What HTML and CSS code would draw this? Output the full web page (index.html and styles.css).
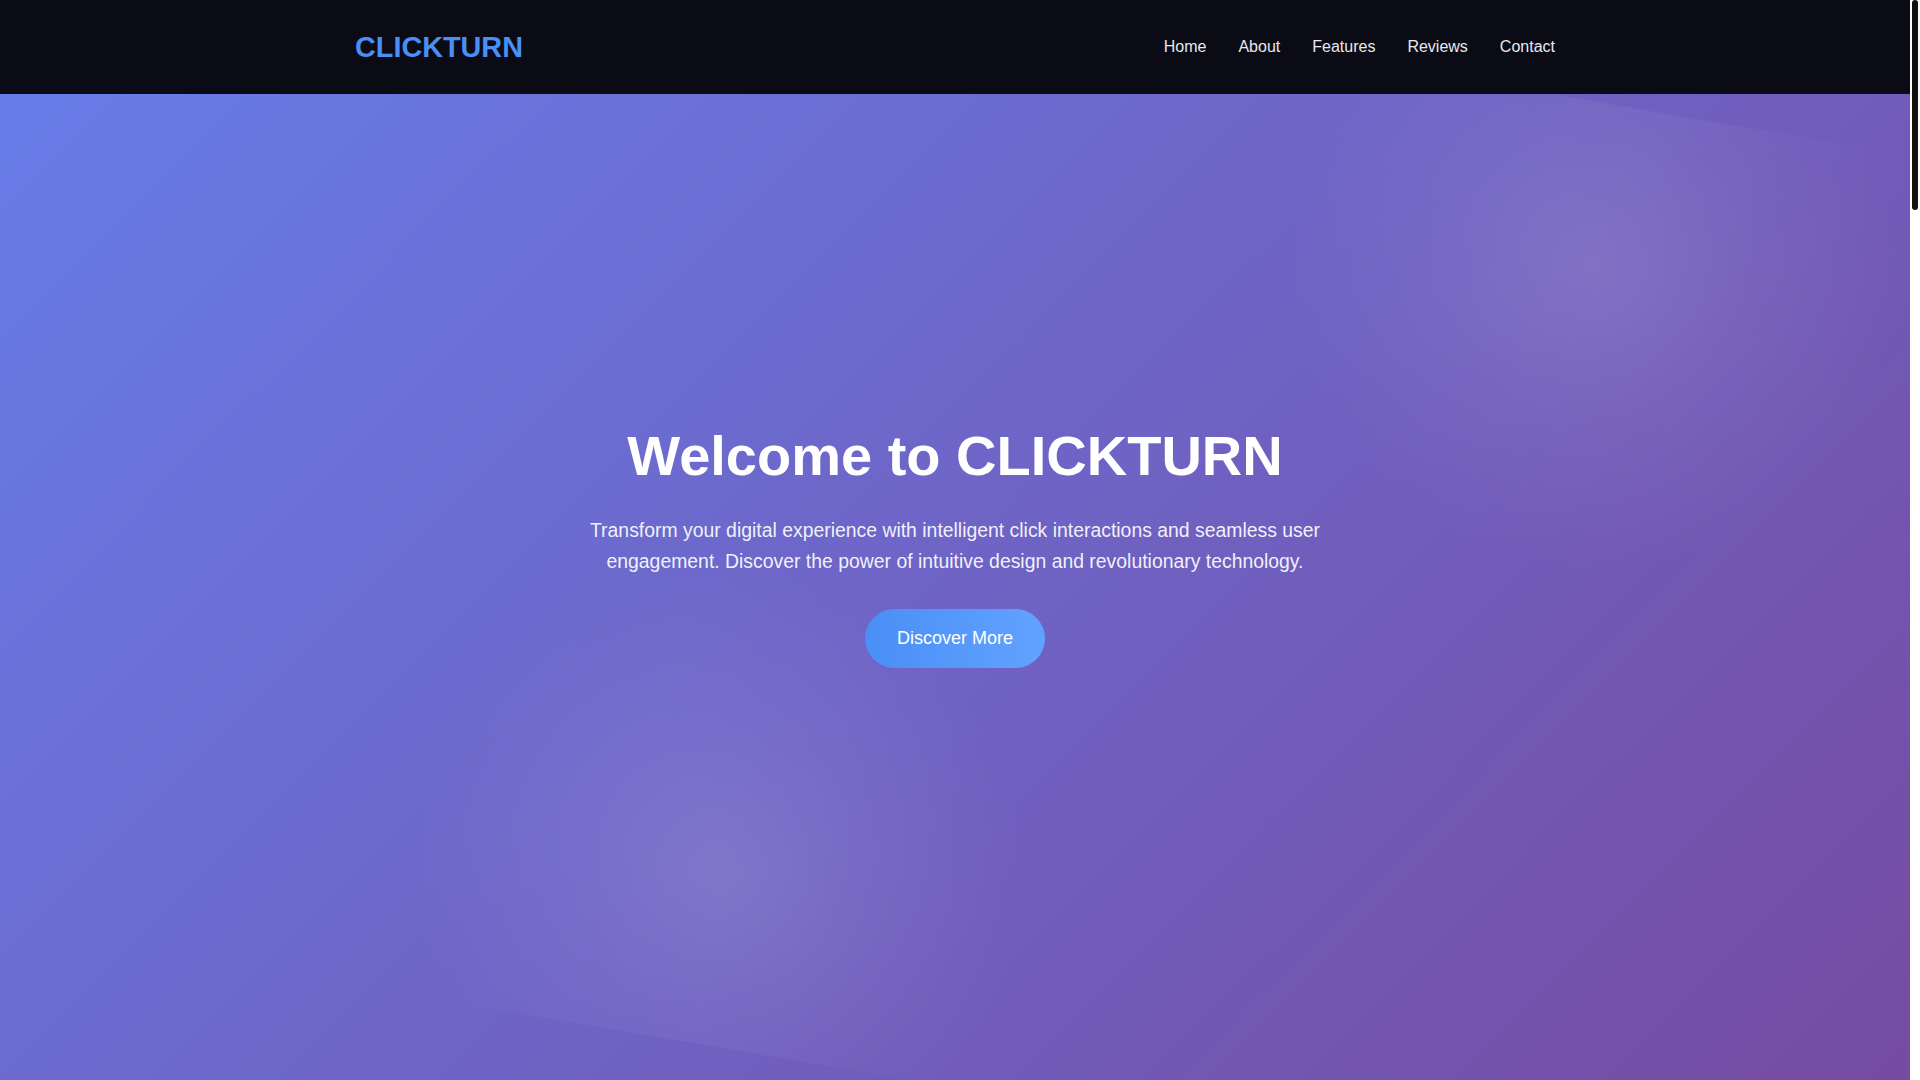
FILE: index.html
```html
<!DOCTYPE html>
<html lang="en">
<head>
<meta charset="UTF-8">
<title>CLICKTURN</title>
<link rel="stylesheet" href="styles.css">
</head>
<body>
<header class="site-header">
  <div class="container header-inner">
    <a class="logo" href="#">CLICKTURN</a>
    <nav class="nav">
      <a href="#">Home</a>
      <a href="#">About</a>
      <a href="#">Features</a>
      <a href="#">Reviews</a>
      <a href="#">Contact</a>
    </nav>
  </div>
</header>
<main class="page">
  <section class="hero">
    <div class="hero-glow"></div>
    <div class="hero-content">
      <h1 class="hero-title">Welcome to CLICKTURN</h1>
      <p class="hero-text">Transform your digital experience with intelligent click interactions and seamless user engagement. Discover the power of intuitive design and revolutionary technology.</p>
      <a class="btn" href="#">Discover More</a>
    </div>
  </section>
</main>
<div class="scrollbar" aria-hidden="true"><div class="scrollbar-thumb"></div></div>
</body>
</html>
```
FILE: styles.css
```css
* { box-sizing: border-box; margin: 0; padding: 0; }

html, body {
  height: 100%;
  overflow: hidden;
  font-family: "Liberation Sans", Arial, sans-serif;
  background: #ffffff;
  color: #fff;
}

body {
  margin-right: 10px;
}

.scrollbar {
  position: fixed;
  top: 0;
  right: 0;
  width: 10px;
  height: 100vh;
  background: #ffffff;
  z-index: 20;
}

.scrollbar-thumb {
  margin: 0 2px;
  height: 210px;
  background: #111111;
  border-radius: 3px;
}

.container {
  max-width: 1200px;
  margin: 0 auto;
}

.site-header {
  position: fixed;
  top: 0;
  left: 0;
  right: 10px;
  z-index: 10;
  background: #0a0b15;
  padding: 30.5px 0;
}

.header-inner {
  display: flex;
  align-items: center;
  justify-content: space-between;
}

.logo {
  font-size: 28.8px;
  line-height: 33px;
  font-weight: 700;
  color: #4a8ff4;
  text-decoration: none;
}

.nav {
  display: flex;
  gap: 32px;
}

.nav a {
  color: #e8e8ee;
  text-decoration: none;
  font-size: 16px;
}

.hero {
  position: relative;
  overflow: hidden;
  height: 100vh;
  display: flex;
  align-items: center;
  justify-content: center;
  padding-top: 10px;
  background: linear-gradient(135deg, #667eea 0%, #764ba2 100%);
  text-align: center;
}

.hero-glow {
  position: absolute;
  inset: 0;
  transform: rotate(9.7deg);
  background:
    radial-gradient(circle 310px at 80.5% 15%, rgba(255,255,255,0.12) 0%, rgba(255,255,255,0.05) 50%, rgba(255,255,255,0) 100%),
    radial-gradient(circle 310px at 40.8% 84%, rgba(255,255,255,0.12) 0%, rgba(255,255,255,0.05) 50%, rgba(255,255,255,0) 100%);
}

.hero-content {
  position: relative;
  z-index: 1;
  display: flex;
  flex-direction: column;
  align-items: center;
}

.hero-title {
  font-size: 56px;
  line-height: 1.2;
  font-weight: 700;
  color: #ffffff;
  margin-bottom: 26px;
}

.hero-text {
  max-width: 800px;
  font-size: 19.4px;
  line-height: 31px;
  color: rgba(255,255,255,0.92);
  margin-bottom: 32px;
}

.btn {
  display: inline-block;
  padding: 19.2px 32px;
  font-size: 18px;
  line-height: 20.7px;
  color: #ffffff;
  text-decoration: none;
  border-radius: 50px;
  background: linear-gradient(90deg, #4a8ff6 0%, #62a2ff 100%);
}
```
